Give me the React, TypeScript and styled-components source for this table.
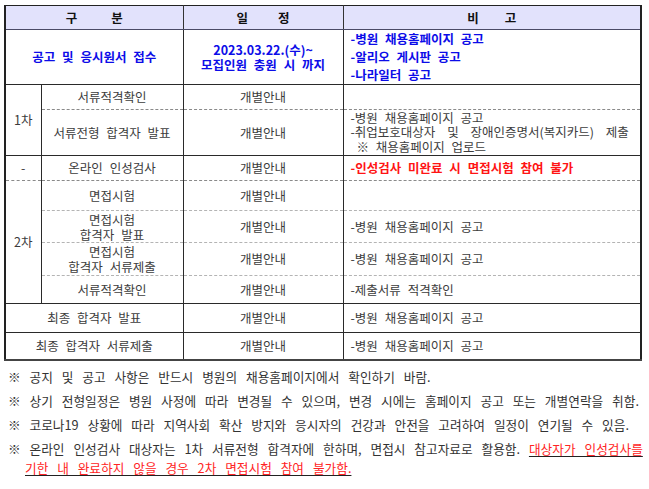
import React from "react";
import styled, { createGlobalStyle } from "styled-components";

type Line = "solid" | "dotted" | "dashed" | "none";

const Global = createGlobalStyle`
  body {
    margin: 0;
    background: #fff;
    font-family: "Noto Sans CJK KR", "Noto Sans", sans-serif;
  }
`;

const App: React.FC = () => {
  return (
    <Page>
      <Global />
      <Table>
        <colgroup>
          <col style={{ width: 36 }} />
          <col style={{ width: 142 }} />
          <col style={{ width: 160 }} />
          <col style={{ width: 298 }} />
        </colgroup>
        <thead>
          <Row $h={24}>
            <Th colSpan={2} $spread={34}>
              구분
            </Th>
            <Th $spread={30}>일정</Th>
            <Th $spread={26}>비고</Th>
          </Row>
        </thead>
        <tbody>
          <Row $h={52}>
            <Td colSpan={2} $tone="blue">
              공고 및 응시원서 접수
            </Td>
            <Td $tone="blue" $lh={15}>
              2023.03.22.(수)~
              <br />
              모집인원 충원 시 까지
            </Td>
            <Td $tone="blue" $left $lh={18}>
              -병원 채용홈페이지 공고
              <br />
              -알리오 게시판 공고
              <br />
              -나라일터 공고
            </Td>
          </Row>
          <Row $h={25}>
            <Td rowSpan={2} $bottom="solid">
              1차
            </Td>
            <Td $bottom="dotted">서류적격확인</Td>
            <Td $bottom="dotted">개별안내</Td>
            <Td $bottom="dotted" $left></Td>
          </Row>
          <Row $h={46}>
            <Td>서류전형 합격자 발표</Td>
            <Td>개별안내</Td>
            <Td $left $lh={14.5}>
              -병원 채용홈페이지 공고
              <br />
              <Justified>-취업보호대상자 및 장애인증명서(복지카드) 제출</Justified>
              <Indent>※ 채용홈페이지 업로드</Indent>
            </Td>
          </Row>
          <Row $h={25}>
            <Td $bottom="dotted">-</Td>
            <Td $bottom="dotted">온라인 인성검사</Td>
            <Td $bottom="dotted">개별안내</Td>
            <Td $bottom="dotted" $left $tone="red">
              -인성검사 미완료 시 면접시험 참여 불가
            </Td>
          </Row>
          <Row $h={30}>
            <Td rowSpan={4} $bottom="solid">
              2차
            </Td>
            <Td $bottom="dashed">면접시험</Td>
            <Td $bottom="dashed">개별안내</Td>
            <Td $bottom="dashed" $left></Td>
          </Row>
          <Row $h={32}>
            <Td $bottom="dashed" $lh={15}>
              면접시험
              <br />
              합격자 발표
            </Td>
            <Td $bottom="dashed">개별안내</Td>
            <Td $bottom="dashed" $left>
              -병원 채용홈페이지 공고
            </Td>
          </Row>
          <Row $h={33}>
            <Td $bottom="dashed" $lh={15}>
              면접시험
              <br />
              합격자 서류제출
            </Td>
            <Td $bottom="dashed">개별안내</Td>
            <Td $bottom="dashed" $left>
              -병원 채용홈페이지 공고
            </Td>
          </Row>
          <Row $h={28}>
            <Td>서류적격확인</Td>
            <Td>개별안내</Td>
            <Td $left>-제출서류 적격확인</Td>
          </Row>
          <Row $h={29}>
            <Td colSpan={2}>최종 합격자 발표</Td>
            <Td>개별안내</Td>
            <Td $left>-병원 채용홈페이지 공고</Td>
          </Row>
          <Row $h={27}>
            <Td colSpan={2}>최종 합격자 서류제출</Td>
            <Td>개별안내</Td>
            <Td $left>-병원 채용홈페이지 공고</Td>
          </Row>
        </tbody>
      </Table>

      <Notes>
        <Note>※ 공지 및 공고 사항은 반드시 병원의 채용홈페이지에서 확인하기 바람.</Note>
        <Note>
          ※ 상기 전형일정은 병원 사정에 따라 변경될 수 있으며, 변경 시에는 홈페이지 공고 또는 개별연락을 취함.
        </Note>
        <Note>
          ※ 코로나19 상황에 따라 지역사회 확산 방지와 응시자의 건강과 안전을 고려하여 일정이 연기될 수 있음.
        </Note>
        <Note>
          ※ 온라인 인성검사 대상자는 1차 서류전형 합격자에 한하며, 면접시 참고자료로 활용함.{" "}
          <Warn>대상자가 인성검사를 기한 내 완료하지 않을 경우 2차 면접시험 참여 불가함.</Warn>
        </Note>
      </Notes>
    </Page>
  );
};

export default App;

// --- Styled Components ---
const Page = styled.div`
  width: 649px;
  padding: 5px 0 0 4px;
  box-sizing: border-box;
`;

const Table = styled.table`
  width: 636px;
  table-layout: fixed;
  border-collapse: collapse;
  border-left: 2px solid #222;
  border-right: 2px solid #222;
  border-top: 1.5px solid #222;
  border-bottom: 2px solid #444;
  font-family: "Noto Sans CJK KR", "Noto Sans", sans-serif;
  font-size: 12.5px;
  word-spacing: 4px;
  color: #3c3c3c;
`;

const Row = styled.tr<{ $h: number }>`
  height: ${(p) => p.$h}px;
`;

const Th = styled.th<{ $spread: number }>`
  padding: 0;
  background: #e2e2fc;
  color: #111;
  font-weight: 700;
  font-size: 12.5px;
  letter-spacing: ${(p) => p.$spread}px;
  text-indent: ${(p) => p.$spread}px;
  border-left: 1px solid #333;
  border-right: 1px solid #333;
  border-bottom: 1px solid #4a4a66;
`;

const lineStyle = (l: Line) =>
  l === "solid"
    ? "1px solid #2a2a2a"
    : l === "dotted"
    ? "1px dashed #8a8a8a"
    : l === "dashed"
    ? "1px dashed #b4b4b4"
    : "none";

const Td = styled.td<{
  $bottom?: Line;
  $left?: boolean;
  $tone?: "blue" | "red";
  $lh?: number;
}>`
  padding: 0 ${(p) => (p.$left ? "6px 0 7px" : "2px")};
  text-align: ${(p) => (p.$left ? "left" : "center")};
  vertical-align: middle;
  line-height: ${(p) => (p.$lh ? `${p.$lh}px` : "16px")};
  border-left: 1px solid #2a2a2a;
  border-right: 1px solid #2a2a2a;
  border-top: none;
  border-bottom: ${(p) => lineStyle(p.$bottom ?? "solid")};
  font-weight: ${(p) => (p.$tone ? 700 : 400)};
  color: ${(p) =>
    p.$tone === "blue" ? "#0c0ce8" : p.$tone === "red" ? "#ff1414" : "#3c3c3c"};
  white-space: nowrap;
`;

const Justified = styled.span`
  display: block;
  word-spacing: 9px;
`;

const Indent = styled.span`
  display: block;
  padding-left: 6px;
`;

const Notes = styled.div`
  margin-top: 6px;
  padding-left: 4px;
  width: 638px;
  font-family: "Noto Sans CJK KR", "Noto Sans", sans-serif;
  font-size: 12.7px;
  word-spacing: 6px;
  color: #333;
`;

const Note = styled.p`
  margin: 0 0 5px;
  line-height: 19px;
  padding-left: 17px;
  text-indent: -17px;
`;

const Warn = styled.span`
  color: #ff2424;
  text-decoration: underline;
  text-decoration-color: #222;
  text-underline-offset: 2px;
`;
